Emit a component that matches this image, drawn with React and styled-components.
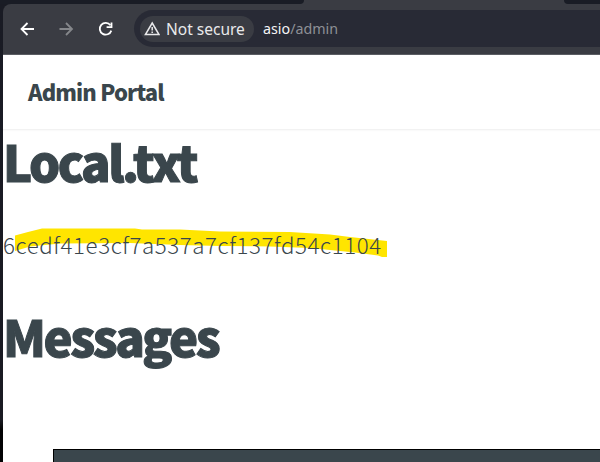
import React from "react";
import styled, { createGlobalStyle } from "styled-components";

const GlobalStyle = createGlobalStyle`
  * { box-sizing: border-box; }
  body { margin: 0; background: #15161d; overflow: hidden; }
`;

const Desktop = styled.div`
  width: 600px;
  height: 462px;
  padding-left: 3px;
  overflow: hidden;
  background: linear-gradient(#191b24 0, #191a22 420px, #020203 430px);
`;

const TabStrip = styled.div`
  display: flex;
  height: 4px;
  background: #3a3c43;
  margin-left: -3px;
`;

const InactiveTabs = styled.div`
  width: ${(p) => p.$width}px;
  margin-left: ${(p) => p.$gap || 0}px;
  background: #191c25;
  border-radius: ${(p) => p.$corners};
`;

const Toolbar = styled.div`
  display: flex;
  align-items: center;
  height: 51px;
  padding: 0 0 1px 14px;
  background: #3a3c43;
  border-bottom: 1px solid #5b5d63;
  border-top-left-radius: 8px;
`;

const NavButton = styled.button`
  display: flex;
  align-items: center;
  justify-content: center;
  width: 20px;
  height: 20px;
  margin: 0 19px 0 0;
  padding: 0;
  border: 0;
  background: none;
  color: ${(p) => (p.$muted ? "#85878b" : "#ffffff")};
`;

const AddressBar = styled.div`
  display: flex;
  align-items: center;
  flex: 1;
  height: 37px;
  padding-left: 6px;
  background: #282a35;
  border-radius: 19px 0 0 19px;
  font: 14.25px/20px "Noto Sans", sans-serif;
`;

const SecurityChip = styled.div`
  display: flex;
  align-items: center;
  gap: 6px;
  width: 114px;
  height: 26px;
  padding-left: 4px;
  border-radius: 13px;
  background: #3a3c43;
  color: #e9e9eb;
  font-size: 15.5px;
  white-space: nowrap;
`;

const Url = styled.div`
  margin-left: 9px;
  color: #f4f4f5;
`;

const UrlPath = styled.span`
  color: #8e9096;
`;

const Page = styled.main`
  height: 407px;
  background: #ffffff;
  color: #3a464c;
  font-family: "Noto Sans CJK SC", sans-serif;
  overflow: hidden;
`;

const SiteHeader = styled.header`
  height: 75px;
  padding: 18px 0 0 25px;
  border-bottom: 1px solid #f2f2f2;
  box-shadow: 0 1px 1px #fafafa;
  font-size: 22px;
  line-height: 36px;
  font-weight: 900;
  letter-spacing: -0.85px;
`;

const Heading = styled.h1`
  height: 68px;
  margin: 0;
  font-size: 49px;
  line-height: 62px;
  font-weight: 900;
  letter-spacing: -2.5px;
  -webkit-text-stroke: 1px #3a464c;
`;

const HashRow = styled.div`
  position: relative;
  height: 50px;
  margin: 24px 0 33px;
`;

const Highlight = styled.svg`
  position: absolute;
  left: 0;
  top: 0;
`;

const Hash = styled.p`
  position: relative;
  margin: 0;
  font-size: 22.3px;
  line-height: 44px;
  font-weight: 300;
  letter-spacing: 0.57px;
`;

const MessageTable = styled.div`
  height: 60px;
  margin: 76px 0 0 50px;
  background: #3a464c;
  border: 1px solid #000;
  border-right: 0;
`;

const Icon = ({ children, size = 20 }) => (
  <svg width={size} height={size} viewBox="0 0 20 20" fill="none" stroke="currentColor" strokeWidth="1.8">
    {children}
  </svg>
);

export default function App() {
  return (
    <>
      <GlobalStyle />
      <Desktop>
        <TabStrip>
          <InactiveTabs $width={304} $corners="0 0 8px 0" />
          <InactiveTabs $width={36} $gap={260} $corners="0 0 0 8px" />
        </TabStrip>
        <Toolbar>
          <NavButton aria-label="Back">
            <Icon><path d="M17 10H5M10.5 4L4.5 10l6 6" /></Icon>
          </NavButton>
          <NavButton $muted aria-label="Forward">
            <Icon><path d="M3.5 10h12M10 4l6 6-6 6" /></Icon>
          </NavButton>
          <NavButton aria-label="Reload">
            <Icon>
              <path d="M15.4 6.2A5.9 5.9 0 1 0 16.3 11.6" />
              <path d="M16.5 3.4V8.2H11.6" />
            </Icon>
          </NavButton>
          <AddressBar>
            <SecurityChip>
              <svg width="16" height="16" viewBox="0 0 16 16" fill="none" stroke="currentColor" strokeWidth="1.5">
                <path d="M8.2 2L15 13.6H1.4Z" />
                <path d="M8.2 6v3.4M8.2 10.4v1.5" />
              </svg>
              Not secure
            </SecurityChip>
            <Url>asio<UrlPath>/admin</UrlPath></Url>
          </AddressBar>
        </Toolbar>
        <Page>
          <SiteHeader>Admin Portal</SiteHeader>
          <Heading>Local.txt</Heading>
          <HashRow>
            <Highlight width="400" height="50" viewBox="3 222 400 50">
              <path
                fill="#ffe500"
                d="M15 235.5L28 232L42 228.5L135 228.5L142 229.5L180 229.5L220 231.5L290 232L330 234.5L350 237L387 241L387 257L382 257L378 255.5L355 252.5L330 250L310 248L270 246.5L220 246L180 245L130 243L60 243.5L30 246.5L15 251Z"
              />
            </Highlight>
            <Hash>6cedf41e3cf7a537a7cf137fd54c1104</Hash>
          </HashRow>
          <Heading>Messages</Heading>
          <MessageTable />
        </Page>
      </Desktop>
    </>
  );
}
